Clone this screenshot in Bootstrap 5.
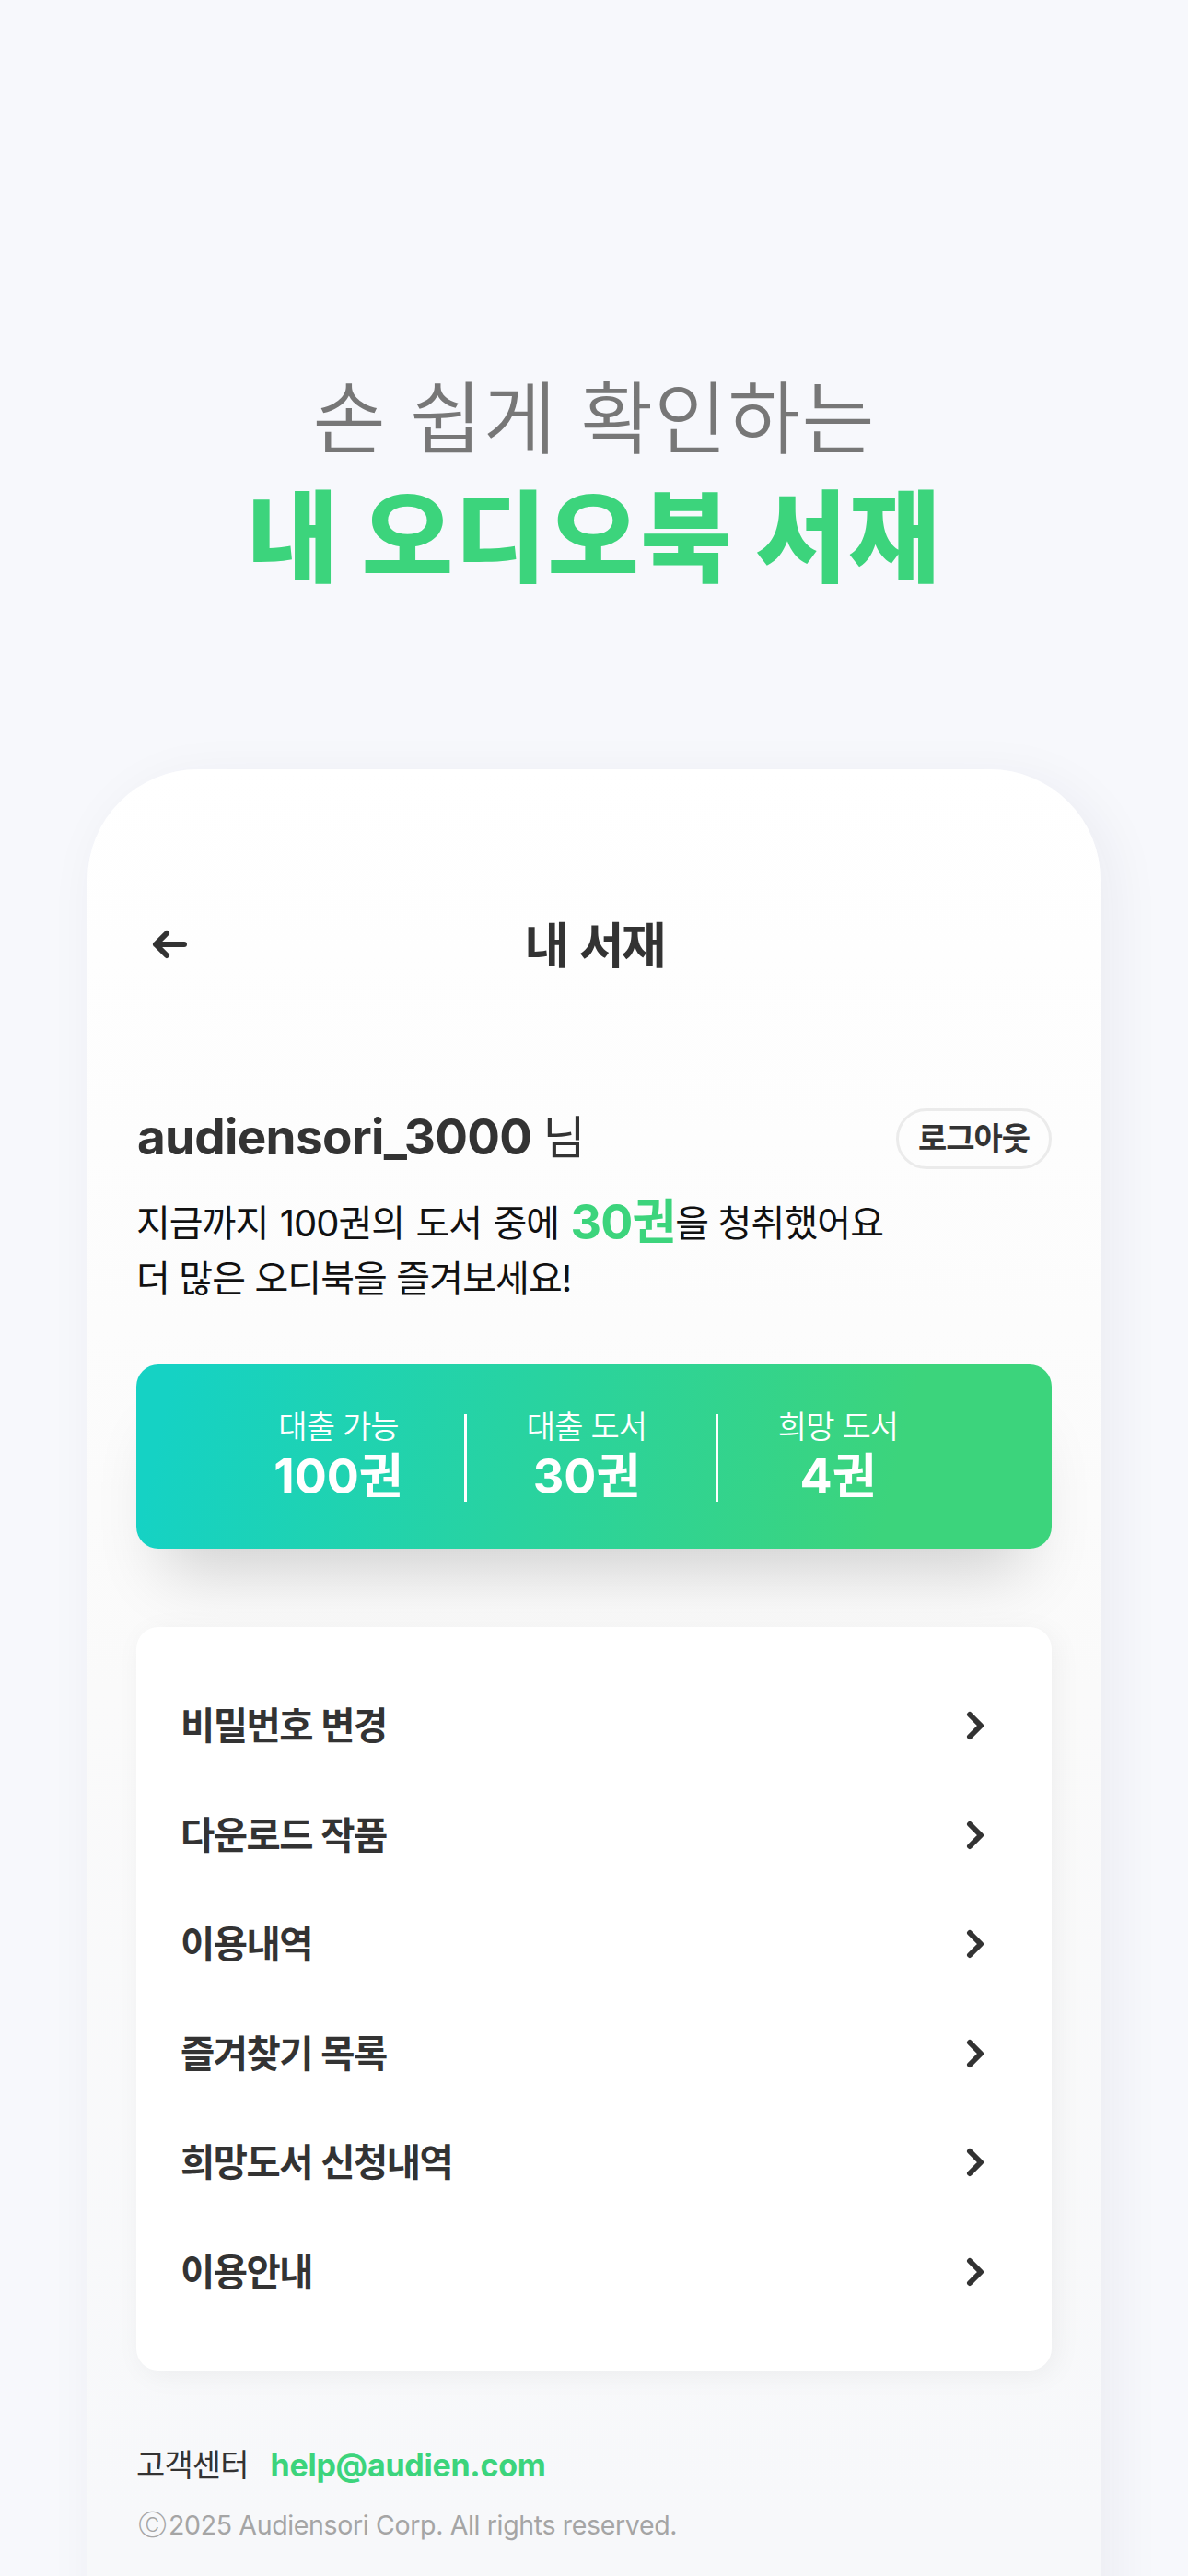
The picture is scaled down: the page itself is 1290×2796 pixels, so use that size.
<!DOCTYPE html>
<html lang="ko">
<head>
    <meta charset="UTF-8">
    <meta name="viewport" content="width=device-width, initial-scale=1.0">
    <title>내 서재</title>
    <link href="https://cdn.jsdelivr.net/npm/bootstrap@5.3.0/dist/css/bootstrap.min.css" rel="stylesheet">
    <style>
        body {
            background: #f7f8fc;
            color: #333;
            font-family: Inter, "Noto Sans CJK KR", sans-serif;
            width: 1290px;
            height: 2796px;
            overflow: hidden;
        }
        .text-brand {
            color: #3cd47c;
        }
        .hero {
            padding-top: 400px;
            height: 835px;
        }
        .hero-sub {
            font-size: 86px;
            font-weight: 350;
            line-height: 110px;
            letter-spacing: 1px;
            color: #777;
        }
        .hero-title {
            font-size: 108px;
            font-weight: 900;
            line-height: 132px;
            letter-spacing: 1.5px;
            word-spacing: 1px;
            margin-top: 8px;
        }
        .phone {
            width: 1100px;
            height: 2100px;
            padding: 141px 53px 0;
            border-radius: 120px 120px 0 0;
            background: linear-gradient(#fff 0, #fdfdfd 400px, #fafafa 1000px, #f7f8fa 1900px);
            box-shadow: 12px 12px 60px rgba(40, 40, 60, .06);
        }
        .topbar {
            height: 100px;
        }
        .topbar-title {
            font-size: 53px;
            padding-top: 2px;
            line-height: 98px;
            letter-spacing: -3px;
            word-spacing: 4px;
        }
        .back-icon {
            width: 38px;
            height: 32px;
            margin: -2px 0 0 17px;
        }
        .profile {
            margin-top: 127px;
            height: 66px;
            padding-left: 1px;
        }
        .user-id {
            font-size: 53px;
            line-height: 62px;
            padding-bottom: 4px;
            letter-spacing: -.7px;
            word-spacing: -2px;
        }
        .user-suffix {
            font-size: 50px;
        }
        .btn-logout {
            width: 169px;
            height: 66px;
            padding: 0 0 2px;
            border: 3px solid #ebebeb;
            font-size: 34px;
            font-weight: 600;
            letter-spacing: -1px;
            color: #333;
        }
        .summary {
            margin-top: 29px;
            font-size: 40px;
            line-height: 60px;
            letter-spacing: -.9px;
            color: #111;
        }
        .summary-first {
            letter-spacing: -1px;
            word-spacing: 2.2px;
        }
        .summary-count {
            font-size: 52px;
            line-height: 1;
            vertical-align: -3px;
        }
        .stats {
            margin-top: 63px;
            height: 200px;
            padding: 3px 91px 0 83px;
            border-radius: 24px;
            background: linear-gradient(103deg, #15d2c4 4%, #3cd47c 82%);
            box-shadow: 0 54px 70px -30px rgba(0, 0, 0, .17);
        }
        .stat {
            height: 95px;
            width: 273px;
        }
        .stat + .stat {
            border-left: 3px solid #fff;
            padding-right: 10px;
        }
        .stat-name {
            font-size: 34px;
            font-weight: 350;
            line-height: 28px;
            letter-spacing: -.8px;
        }
        .stat-value {
            font-size: 52px;
            line-height: 50px;
            margin-top: 15px;
        }
        .menu {
            margin-top: 85px;
            height: 807px;
            padding: 47.7px 0;
            border-radius: 24px;
            box-shadow: 5px 5px 30px rgba(0, 0, 0, .05);
        }
        .menu .list-group-item {
            height: 118.6px;
            padding: 0 73px 0 48px;
            font-size: 40.5px;
            letter-spacing: -1.5px;
            word-spacing: 1px;
            color: #333;
        }
        .menu-label {
            padding-top: 3px;
        }
        .chevron {
            width: 20px;
            height: 32px;
        }
        .help {
            margin-top: 78px;
            font-size: 34px;
            line-height: 50px;
            letter-spacing: -.9px;
        }
        .help-mail {
            margin-left: 24px;
            letter-spacing: -.25px;
        }
        .copyright {
            margin-top: 20px;
            font-size: 28.5px;
            line-height: 40px;
            letter-spacing: -.35px;
            color: #a5a5a5;
        }
        .copyright-sign {
            flex: none;
            width: 35px;
            padding-left: 3px;
            font-size: 21px;
            font-weight: 300;
        }
    </style>
</head>
<body>
    <header class="hero text-center">
        <div class="hero-sub">손 쉽게 확인하는</div>
        <h1 class="hero-title text-brand mb-0">내 오디오북 서재</h1>
    </header>

    <main class="phone mx-auto">
        <!-- Top bar -->
        <div class="topbar row g-0 align-items-center">
            <div class="col-2 d-flex">
                <svg class="back-icon" viewBox="0 0 38 32" fill="none" stroke="#333" stroke-width="6" stroke-linecap="round" stroke-linejoin="round">
                    <path d="M16 4L4 16l12 12M4 16h31"/>
                </svg>
            </div>
            <div class="col-8 text-center topbar-title fw-bold">내 서재</div>
        </div>

        <!-- Profile -->
        <div class="profile d-flex justify-content-between align-items-center">
            <div class="user-id"><span class="fw-bold">audiensori_3000</span> <span class="user-suffix">님</span></div>
            <button class="btn btn-logout rounded-pill">로그아웃</button>
        </div>
        <p class="summary mb-0">
            <span class="summary-first">지금까지 100권의 도서 중에 </span><span class="summary-count text-brand fw-bold">30권</span>을 청취했어요<br>
            더 많은 오디북을 즐겨보세요!
        </p>

        <!-- Loan stats -->
        <div class="stats d-flex align-items-center text-center text-white">
            <div class="stat">
                <div class="stat-name">대출 가능</div>
                <div class="stat-value fw-bold">100권</div>
            </div>
            <div class="stat">
                <div class="stat-name">대출 도서</div>
                <div class="stat-value fw-bold">30권</div>
            </div>
            <div class="stat">
                <div class="stat-name">희망 도서</div>
                <div class="stat-value fw-bold">4권</div>
            </div>
        </div>

        <!-- Menu -->
        <div class="menu list-group list-group-flush bg-white" id="menu"></div>

        <!-- Footer -->
        <div class="help">고객센터<span class="help-mail text-brand fw-bold">help@audien.com</span></div>
        <div class="copyright d-flex"><span class="copyright-sign">Ⓒ</span>2025 Audiensori Corp. All rights reserved.</div>
    </main>

    <script src="https://cdn.jsdelivr.net/npm/bootstrap@5.3.0/dist/js/bootstrap.bundle.min.js"></script>
    <script>
        const items = ["비밀번호 변경", "다운로드 작품", "이용내역", "즐겨찾기 목록", "희망도서 신청내역", "이용안내"];
        document.getElementById("menu").innerHTML = items.map(item => `
            <a href="#" class="list-group-item bg-transparent border-0 d-flex justify-content-between align-items-center fw-bold">
                <span class="menu-label">${item}</span>
                <svg class="chevron" viewBox="0 0 20 32" fill="none" stroke="#333" stroke-width="6" stroke-linecap="round" stroke-linejoin="round">
                    <path d="M4 4l12 12L4 28"/>
                </svg>
            </a>`).join("");
    </script>
</body>
</html>
